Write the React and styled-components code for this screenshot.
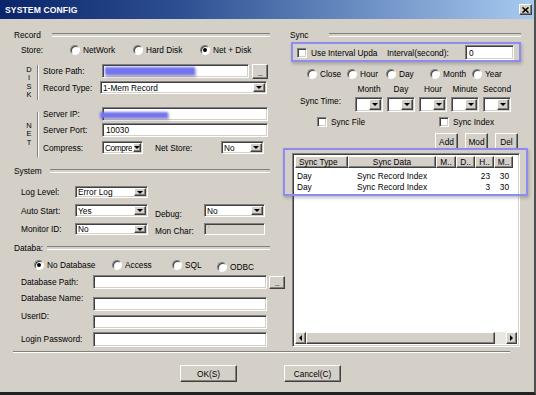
import React from "react";
import styled, { createGlobalStyle, css } from "styled-components";

const GlobalStyle = createGlobalStyle`
  html, body {
    margin: 0;
    padding: 0;
    background: #d4d0c8;
  }
  body {
    font-family: "Liberation Sans", Arial, sans-serif;
    font-size: 8.3px;
    color: #000;
  }
  * {
    box-sizing: border-box;
  }
`;

const sunken = css`
  border: 1px solid;
  border-color: #808080 #ffffff #ffffff #808080;
  box-shadow: inset 1px 1px 0 #404040, inset -1px -1px 0 #d4d0c8;
`;

const raised = css`
  border: 1px solid;
  border-color: #ffffff #404040 #404040 #ffffff;
  box-shadow: inset -1px -1px 0 #808080;
  background: #d4d0c8;
`;

const Dialog = styled.div`
  width: 536px;
  height: 395px;
  background: #d4d0c8;
  border-right: 2px solid #505050;
  border-bottom: 3px solid #222;
  display: flex;
  flex-direction: column;
  overflow: hidden;
`;

const TitleBar = styled.div`
  height: 19px;
  flex: none;
  background: linear-gradient(to right, #0a246a 0%, #2f5294 35%, #a6caf0 100%);
  display: flex;
  align-items: center;
  justify-content: space-between;
  padding: 0 2px 0 5px;
`;

const Title = styled.div`
  color: #fff;
  font-weight: bold;
  font-size: 8.6px;
  letter-spacing: 0.1px;
`;

const CloseBtn = styled.div`
  ${raised};
  width: 13px;
  height: 11px;
  display: flex;
  align-items: center;
  justify-content: center;
`;

const Main = styled.div`
  height: 331px;
  flex: none;
  display: grid;
  grid-template-columns: 276px 1fr;
  column-gap: 8px;
`;

const LeftCol = styled.div`
  display: flex;
  flex-direction: column;
  padding: 0 6px 0 14px;
`;

const RightCol = styled.div`
  position: relative;
  display: flex;
  flex-direction: column;
  padding: 0 13px 0 0;
`;

const GroupHead = styled.div`
  display: flex;
  align-items: center;
  height: 12px;
  margin-top: ${p => p.$mt || 0}px;
  padding-left: ${p => p.$pl || 0}px;
  &::after {
    content: "";
    flex: 1;
    margin-left: ${p => p.$gap}px;
    height: 2px;
    border-top: 1px solid #808080;
    border-bottom: 1px solid #fff;
  }
`;

const Row = styled.div`
  display: flex;
  align-items: center;
  height: ${p => p.$h}px;
  margin-top: ${p => p.$mt || 0}px;
  padding-left: ${p => p.$pl || 0}px;
  gap: ${p => p.$gap || 0}px;
  flex: none;
`;

const Label = styled.span`
  width: ${p => (p.$w ? `${p.$w}px` : "auto")};
  padding-left: ${p => p.$pl || 0}px;
  margin-left: ${p => p.$ml || 0}px;
  flex: none;
  white-space: nowrap;
  transform: translateY(${p => p.$dy || 0}px);
`;

const Field = styled.div`
  ${sunken};
  position: relative;
  background: ${p => (p.$disabled ? "#d4d0c8" : "#fff")};
  width: ${p => p.$w}px;
  height: 100%;
  margin-left: ${p => p.$ml || 0}px;
  padding-left: 3px;
  display: flex;
  align-items: center;
  flex: none;
  color: ${p => (p.$disabled ? "#a0a0a0" : "#000")};
`;

const Smear = styled.div`
  position: absolute;
  left: ${p => p.$x}px;
  top: ${p => p.$y}px;
  width: ${p => p.$w}px;
  height: ${p => p.$h}px;
  background: #7474ee;
  filter: blur(0.8px);
  box-shadow: 1px 2px 2px rgba(40, 40, 80, 0.35);
`;

const SelectBox = styled.div`
  ${sunken};
  background: #fff;
  width: ${p => p.$w}px;
  height: 100%;
  margin-left: ${p => p.$ml || 0}px;
  padding-left: 2px;
  display: flex;
  align-items: center;
  overflow: hidden;
  flex: none;
`;

const SelectText = styled.span`
  flex: 1;
  min-width: 0;
  white-space: nowrap;
  overflow: hidden;
  letter-spacing: ${p => p.$ls || 0}px;
`;

const DropBtn = styled.span`
  ${raised};
  width: ${p => p.$bw || 12}px;
  align-self: stretch;
  margin: 1px;
  flex: none;
  display: flex;
  align-items: center;
  justify-content: center;
  &::after {
    content: "";
    border-left: 3px solid transparent;
    border-right: 3px solid transparent;
    border-top: 3px solid #000;
  }
`;

const Select = ({ w, ml, bw, ls, value }) => (
  <SelectBox $w={w} $ml={ml}>
    <SelectText $ls={ls}>{value}</SelectText>
    <DropBtn $bw={bw} />
  </SelectBox>
);

const Browse = styled.div`
  ${raised};
  width: 16px;
  height: ${p => p.$h || 15}px;
  margin-left: ${p => p.$ml || 0}px;
  flex: none;
  display: flex;
  align-items: flex-end;
  justify-content: center;
  font-size: 7px;
  line-height: 9px;
  letter-spacing: -0.5px;
`;

const Choice = styled.span`
  display: flex;
  align-items: center;
  width: ${p => (p.$w ? `${p.$w}px` : "auto")};
  flex: none;
  white-space: nowrap;
  transform: translateY(${p => p.$dy || 0}px);
`;

const Radio = styled.span`
  width: 10px;
  height: 10px;
  border-radius: 50%;
  border: 1px solid;
  border-color: #808080 #fff #fff #808080;
  box-shadow: inset 1px 1px 0 #404040;
  background: #fff;
  margin-right: 3px;
  flex: none;
  display: flex;
  align-items: center;
  justify-content: center;
  &::after {
    content: "";
    width: 4px;
    height: 4px;
    border-radius: 50%;
    background: ${p => (p.$on ? "#000" : "transparent")};
  }
`;

const Check = styled.span`
  ${sunken};
  width: 10px;
  height: 10px;
  background: #fff;
  margin-right: 4px;
  flex: none;
`;

const Block = styled.div`
  display: flex;
  height: ${p => p.$h}px;
  margin-top: ${p => p.$mt}px;
  flex: none;
`;

const Letters = styled.div`
  width: 24px;
  padding-left: 7px;
  display: flex;
  flex-direction: column;
  justify-content: center;
  align-items: center;
  font-size: 7.5px;
  line-height: 8.5px;
  border-right: 1px solid #808080;
  box-shadow: 1px 0 0 #fff;
  margin: ${p => p.$m || "0"};
`;

const BlockRows = styled.div`
  flex: 1;
  display: flex;
  flex-direction: column;
  padding-left: 5px;
`;

const Btn = styled.div`
  ${raised};
  width: ${p => p.$w}px;
  height: 100%;
  display: flex;
  align-items: center;
  justify-content: center;
  flex: none;
`;

const TimeGrid = styled.div`
  display: grid;
  grid-template-columns: repeat(5, 28px);
  column-gap: 4px;
  height: 100%;
  justify-items: center;
  align-items: center;
`;

const ListView = styled.div`
  ${sunken};
  background: #fff;
  margin: 3px 0 0 8px;
  width: 228px;
  height: 194px;
  padding: 2px;
  display: flex;
  flex-direction: column;
  flex: none;
`;

const ListHead = styled.div`
  display: flex;
  height: 12px;
  flex: none;
`;

const HeadCell = styled.div`
  ${raised};
  width: ${p => p.$w}px;
  flex: none;
  display: flex;
  align-items: center;
  justify-content: ${p => (p.$left ? "flex-start" : "center")};
  padding-left: ${p => (p.$left ? 3 : 0)}px;
  white-space: nowrap;
  overflow: hidden;
`;

const ListBody = styled.div`
  flex: 1;
  padding-top: 2px;
`;

const ListRow = styled.div`
  display: flex;
  height: 11px;
  align-items: center;
`;

const Cell = styled.div`
  width: ${p => p.$w}px;
  flex: none;
  text-align: ${p => p.$align || "left"};
  padding: 0 ${p => (p.$align === "right" ? 4 : 0)}px 0 ${p => (p.$align ? 0 : 2)}px;
  white-space: nowrap;
`;

const ScrollBar = styled.div`
  display: flex;
  height: 12px;
  flex: none;
  background: #e9e7e2;
`;

const Arrow = styled.div`
  ${raised};
  width: ${p => p.$w || 11}px;
  flex: none;
  display: flex;
  align-items: center;
  justify-content: center;
  &::after {
    content: "";
    display: ${p => (p.$dir ? "block" : "none")};
    border-top: 3px solid transparent;
    border-bottom: 3px solid transparent;
    border-${p => (p.$dir === "left" ? "right" : "left")}: 3px solid #000;
  }
`;

const Track = styled.div`
  flex: 1;
`;

const Annot = styled.div`
  position: absolute;
  left: ${p => p.$x}px;
  top: ${p => p.$y}px;
  width: ${p => p.$w}px;
  height: ${p => p.$h}px;
  border: 2px solid #8c8cf2;
  box-shadow: 1px 2px 3px rgba(60, 60, 60, 0.3);
  pointer-events: none;
`;

const Separator = styled.div`
  height: 2px;
  margin: 1px 24px 0 13px;
  border-top: 1px solid #808080;
  border-bottom: 1px solid #fff;
  flex: none;
`;

const Footer = styled.div`
  display: flex;
  height: 17px;
  margin-top: 12px;
  padding-left: 180px;
  gap: 47px;
  flex: none;
`;

const cols = [53, 88, 20, 19, 19, 19];

const rows = [
  ["Day", "Sync Record Index", "", "", "23", "30"],
  ["Day", "Sync Record Index", "", "", "3", "30"],
];

const App = () => (
  <>
    <GlobalStyle />
    <Dialog>
      <TitleBar>
        <Title>SYSTEM CONFIG</Title>
        <CloseBtn>
          <svg width="7" height="6" viewBox="0 0 7 6">
            <path d="M0.5 0.5 L6.5 5.5 M6.5 0.5 L0.5 5.5" stroke="#000" strokeWidth="1.6" />
          </svg>
        </CloseBtn>
      </TitleBar>

      <Main>
        <LeftCol>
          <GroupHead $mt={10} $gap={11}>Record</GroupHead>
          <Row $mt={3} $h={12}>
            <Label $w={56} $pl={7}>Store:</Label>
            <Choice $w={63}><Radio />NetWork</Choice>
            <Choice $w={67}><Radio />Hard Disk</Choice>
            <Choice><Radio $on />Net + Disk</Choice>
          </Row>

          <Block $mt={7} $h={37}>
            <Letters $m="2px 0 0">
              <span>D</span>
              <span>I</span>
              <span>S</span>
              <span>K</span>
            </Letters>
            <BlockRows>
              <Row $mt={1} $h={14}>
                <Label $w={57}>Store Path:</Label>
                <Field $w={147} $ml={2}>
                  <Smear $x={2} $y={2} $w={90} $h={8} />
                </Field>
                <Browse $ml={3}>...</Browse>
              </Row>
              <Row $mt={3} $h={13}>
                <Label $w={57}>Record Type:</Label>
                <Select w={167} value="1-Mem Record" />
              </Row>
            </BlockRows>
          </Block>

          <Block $mt={6} $h={51}>
            <Letters $m="6px 0 0">
              <span>N</span>
              <span>E</span>
              <span>T</span>
            </Letters>
            <BlockRows>
              <Row $mt={1} $h={14}>
                <Label $w={57}>Server IP:</Label>
                <Field $w={166} $ml={2}>
                  <Smear $x={-3} $y={4} $w={68} $h={6} />
                </Field>
              </Row>
              <Row $mt={2} $h={14}>
                <Label $w={57}>Server Port:</Label>
                <Field $w={166} $ml={2}>10030</Field>
              </Row>
              <Row $mt={4} $h={13}>
                <Label $w={57}>Compress:</Label>
                <Select w={41} ml={2} bw={8} ls={-0.4} value="Compre" />
                <Label $w={66} $ml={12}>Net Store:</Label>
                <Select w={43} value="No" />
              </Row>
            </BlockRows>
          </Block>

          <GroupHead $mt={8} $gap={8}>System</GroupHead>
          <Row $mt={9} $h={12}>
            <Label $w={61} $pl={7}>Log Level:</Label>
            <Select w={73} value="Error Log" />
          </Row>
          <Row $mt={6} $h={13}>
            <Label $w={61} $pl={7}>Auto Start:</Label>
            <Select w={73} value="Yes" />
            <Label $w={56} $pl={7} $dy={3}>Debug:</Label>
            <Select w={61} value="No" />
          </Row>
          <Row $mt={6} $h={12}>
            <Label $w={61} $pl={7}>Monitor ID:</Label>
            <Select w={73} value="No" />
            <Label $w={56} $pl={7} $dy={2}>Mon Char:</Label>
            <Field $w={61} $disabled>'</Field>
          </Row>

          <GroupHead $mt={7} $gap={4}>Databa:</GroupHead>
          <Row $mt={5} $h={12} $pl={20}>
            <Choice $w={78}><Radio $on />No Database</Choice>
            <Choice $w={60}><Radio />Access</Choice>
            <Choice $w={45}><Radio />SQL</Choice>
            <Choice $dy={2}><Radio />ODBC</Choice>
          </Row>
          <Row $mt={4} $h={14}>
            <Label $w={79} $pl={7}>Database Path:</Label>
            <Field $w={174} />
            <Browse $ml={2} $h={13}>...</Browse>
          </Row>
          <Row $mt={8} $h={14}>
            <Label $w={79} $pl={7} $dy={-6}>Database Name:</Label>
            <Field $w={174} />
          </Row>
          <Row $mt={4} $h={14}>
            <Label $w={79} $pl={7} $dy={-6}>UserID:</Label>
            <Field $w={174} />
          </Row>
          <Row $mt={3} $h={15}>
            <Label $w={79} $pl={7} $dy={-1}>Login Password:</Label>
            <Field $w={174} />
          </Row>
        </LeftCol>

        <RightCol>
          <GroupHead $mt={10} $gap={21} $pl={6}>Sync</GroupHead>
          <Row $mt={4} $h={15} $pl={13}>
            <Check />
            <Label $w={76}>Use Interval Upda</Label>
            <Label $w={78}>Interval(second):</Label>
            <Field $w={49}>0</Field>
          </Row>
          <Row $mt={8} $h={12} $pl={23}>
            <Choice $w={40}><Radio />Close</Choice>
            <Choice $w={39}><Radio />Hour</Choice>
            <Choice $w={44}><Radio />Day</Choice>
            <Choice $w={42}><Radio />Month</Choice>
            <Choice><Radio />Year</Choice>
          </Row>
          <Row $mt={3} $h={12} $pl={71}>
            <TimeGrid>
              <span>Month</span>
              <span>Day</span>
              <span>Hour</span>
              <span>Minute</span>
              <span>Second</span>
            </TimeGrid>
          </Row>
          <Row $mt={2} $h={15} $pl={16}>
            <Label $w={55} $dy={-4}>Sync Time:</Label>
            <TimeGrid>
              {[0, 1, 2, 3, 4].map(i => (
                <Select key={i} w={28} value="" />
              ))}
            </TimeGrid>
          </Row>
          <Row $mt={4} $h={11} $pl={33}>
            <Choice $w={122}><Check />Sync File</Choice>
            <Choice><Check />Sync Index</Choice>
          </Row>
          <Row $mt={6} $h={17} $pl={151} $gap={7}>
            <Btn $w={23}>Add</Btn>
            <Btn $w={23}>Mod</Btn>
            <Btn $w={23}>Del</Btn>
          </Row>

          <ListView>
            <ListHead>
              <HeadCell $w={cols[0]} $left>Sync Type</HeadCell>
              <HeadCell $w={cols[1]}>Sync Data</HeadCell>
              <HeadCell $w={cols[2]}>M..</HeadCell>
              <HeadCell $w={cols[3]}>D..</HeadCell>
              <HeadCell $w={cols[4]}>H..</HeadCell>
              <HeadCell $w={cols[5]}>M..</HeadCell>
            </ListHead>
            <ListBody>
              {rows.map((r, i) => (
                <ListRow key={i}>
                  <Cell $w={cols[0]}>{r[0]}</Cell>
                  <Cell $w={cols[1]} $align="center">{r[1]}</Cell>
                  <Cell $w={cols[2]} $align="right">{r[2]}</Cell>
                  <Cell $w={cols[3]} $align="right">{r[3]}</Cell>
                  <Cell $w={cols[4]} $align="right">{r[4]}</Cell>
                  <Cell $w={cols[5]} $align="right">{r[5]}</Cell>
                </ListRow>
              ))}
            </ListBody>
            <ScrollBar>
              <Arrow $dir="left" />
              <Arrow $w={189} />
              <Track />
              <Arrow $dir="right" />
            </ScrollBar>
          </ListView>

          <Annot $x={7} $y={23} $w={230} $h={20} />
          <Annot $x={-1} $y={129} $w={245} $h={48} />
        </RightCol>
      </Main>

      <Separator />
      <Footer>
        <Btn $w={57}>OK(S)</Btn>
        <Btn $w={57}>Cancel(C)</Btn>
      </Footer>
    </Dialog>
  </>
);

export default App;
